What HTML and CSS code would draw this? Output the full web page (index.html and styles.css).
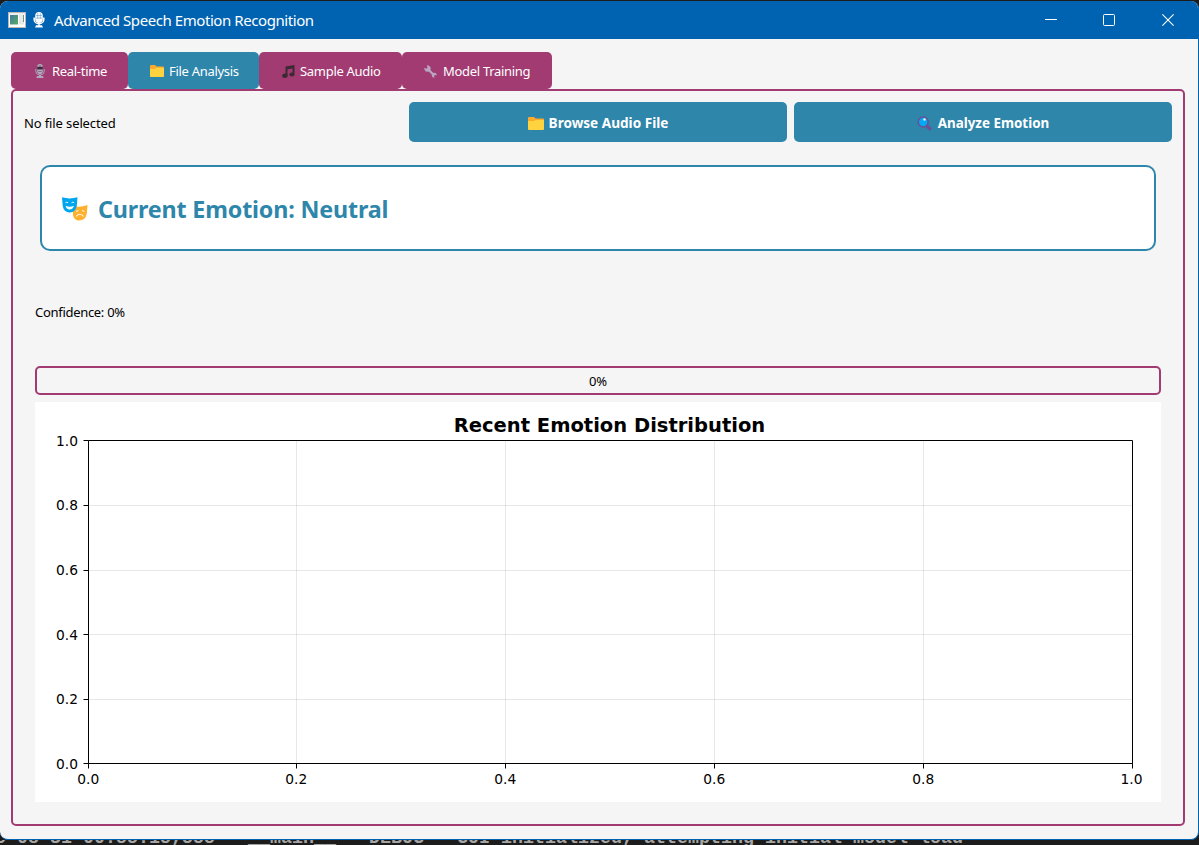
FILE: index.html
```html
<!DOCTYPE html>
<html lang="en">
<head>
<meta charset="utf-8">
<title>Advanced Speech Emotion Recognition</title>
<link rel="stylesheet" href="styles.css">
</head>
<body>
<main class="window">
  <header class="titlebar">
    <svg class="app-icon" width="18" height="16" viewBox="0 0 18 16"><rect width="18" height="16" fill="#fff"/><rect x=".5" y=".5" width="17" height="15" fill="none" stroke="#b9b9b9"/><path d="M1 2h16" stroke="#ddd"/><defs><linearGradient id="g" x2="1" y2="1"><stop stop-color="#4379a0"/><stop offset="1" stop-color="#57ad63"/></linearGradient></defs><rect x="2" y="3" width="8" height="9.500" fill="url(#g)"/><rect x="11" y="3" width="5" height="9.500" fill="#e8e8e8"/><path d="M15.500 3v7" stroke="#6b9a86"/></svg>
    <svg class="mic-icon" width="12" height="16" viewBox="0 0 12 16"><rect x="2.200" y="0" width="7.600" height="11" rx="3.800" fill="#fff"/><path d="M1.200 5.500v2.200a4.800 4 0 0 0 9.600 0V5.500M6 11.500V14" fill="none" stroke="#fff" stroke-width="1.500"/><path d="M2 15.500l1-2.200h6l1 2.200z" fill="#fff"/><path d="M3 3.500h6M3 6h6M4.700 1v6M7.300 1v6" stroke="#0063b1" stroke-width=".5" stroke-opacity=".7"/></svg>
    <h1 class="title">Advanced Speech Emotion Recognition</h1>
    <div class="controls">
      <svg class="minimize" width="12" height="12" viewBox="0 0 12 12"><path d="M0 5.500h12" stroke="#fff"/></svg>
      <svg width="12" height="12" viewBox="0 0 12 12"><rect x=".5" y=".5" width="11" height="11" rx="1" fill="none" stroke="#fff"/></svg>
      <svg width="12" height="12" viewBox="0 0 12 12"><path d="M.4.4l11.200 11.200M11.600.4L.4 11.600" stroke="#fff" stroke-width="1.100"/></svg>
    </div>
  </header>
  <div class="client">
    <nav class="tabs">
      <div class="tab tab-live"><svg width="10" height="14" viewBox="0 0 10 14"><rect x="2.200" y="0" width="5.600" height="10" rx="2.800" fill="#b4a9bd"/><path d="M.8 5v2a4.200 4 0 0 0 8.400 0V5" fill="none" stroke="#a394ae" stroke-width="1.200"/><path d="M2.200 2.800h5.600v2.700H2.200z" fill="#3c2a3e"/><path d="M3.200 7.500h3.600M5 1v2" stroke="#6b5d70" stroke-width=".7"/><path d="M4 11h2v1l2.500.5V14h-7v-1.500L4 12z" fill="#b4a9bd"/></svg><span>Real-time</span></div>
      <div class="tab tab-file active"><svg width="14" height="12" viewBox="0 0 14 12"><path d="M0 1q0-1 1-1h4l1.500 1.500H13q1 0 1 1V5H0z" fill="#ffa92b"/><path d="M0 4h5l1.500-1.200H13q1 0 1 1V11q0 1-1 1H1q-1 0-1-1z" fill="#ffd23f"/></svg><span>File Analysis</span></div>
      <div class="tab tab-sample"><svg width="13" height="13" viewBox="0 0 13 13"><path d="M3.500 1.500L12.500 0v9.500h-2V3.500l-5 .8V11h-2z" fill="#3c2a33"/><ellipse cx="2.900" cy="10.700" rx="2.700" ry="2.200" fill="#3c2a33"/><ellipse cx="9.900" cy="9.500" rx="2.600" ry="2.100" fill="#3c2a33"/></svg><span>Sample Audio</span></div>
      <div class="tab tab-model"><svg width="13" height="13" viewBox="0 0 13 13"><path d="M3.800 4l6 6" stroke="#b9a4c4" stroke-width="2.300"/><path d="M2.800.4A3.200 3.200 0 1 1 .4 2.800l2 .9 1.100-1.200zM10.500 12.700a2.500 2.500 0 1 1 2.200-2.300l-1.600-.4-1 1z" fill="#b9a4c4"/></svg><span>Model Training</span></div>
    </nav>
    <section class="pane">
      <div class="actions">
        <div class="file-label">No file selected</div>
        <button class="button browse"><svg width="16" height="13" viewBox="0 0 16 13"><path d="M0 1q0-1 1-1h5l1.500 1.500H15q1 0 1 1V6H0z" fill="#ffa92b"/><path d="M0 4h6l1.500-1H15q1 0 1 1v8q0 1-1 1H1q-1 0-1-1z" fill="#ffd23f"/></svg><span>Browse Audio File</span></button>
        <button class="button analyze"><svg width="15" height="15" viewBox="0 0 15 15"><path d="M9.500 9.500l3.500 3.200" stroke="#6b5094" stroke-width="3.200" stroke-linecap="round"/><circle cx="6.200" cy="6" r="5" fill="#00a9f4" stroke="#6b5094" stroke-width="1.600"/><circle cx="7.500" cy="3.500" r="1.200" fill="#e8faff"/></svg><span>Analyze Emotion</span></button>
      </div>
      <div class="emotion">
        <svg width="26" height="24" viewBox="0 0 26 24"><path d="M11 9q7 2 14.500-1l-.7 8.500Q23.500 23.500 17 23.500q-4.500 0-6-5z" fill="#ffb02e"/><path d="M0 .3Q7.500 2.500 15.500.3L14.800 9q-1.300 6-7 6.500Q1.700 15 .7 9z" fill="#00a6ed"/><path d="M3.500 5.700q1.300-1 2.600 0M9.500 5.700q1.300-1 2.600 0" stroke="#fff" stroke-width=".9" fill="none"/><path d="M3.500 8.800q4.200 2 8.400 0-.8 3.700-4.200 3.700T3.500 8.800z" fill="#fff"/><path d="M14 14.500l2.500-1M20 13.500l2.500 1M14 19.500q4-4.500 7.500 0" fill="none" stroke="#fff4dc" stroke-width="1.100"/></svg>
        <span>Current Emotion: Neutral</span>
      </div>
      <div class="confidence">Confidence: 0%</div>
      <div class="progress"><span>0%</span></div>
      <svg class="chart" width="1126" height="400" viewBox="0 0 1126 400">
        <rect width="1126" height="400" fill="#fff"/>
        <path class="grid" d="M261.500 38v323M470.500 38v323M679.500 38v323M888.500 38v323M53 103.500h1044M53 168.500h1044M53 232.500h1044M53 297.500h1044"/>
        <path class="axis" d="M53.500 38.500h1044v323h-1044zM48.500 38.500h5M48.500 103.500h5M48.500 168.500h5M48.500 232.500h5M48.500 297.500h5M48.500 361.500h5M53.500 361.500v5M261.500 361.500v5M470.500 361.500v5M679.500 361.500v5M888.500 361.500v5M1097.500 361.500v5"/>
        <text class="chart-title" x="574.500" y="30">Recent Emotion Distribution</text>
        <g class="y-labels"><text x="43" y="44">1.0</text><text x="43" y="108">0.8</text><text x="43" y="173">0.6</text><text x="43" y="238">0.4</text><text x="43" y="302">0.2</text><text x="43" y="367">0.0</text></g>
        <g class="x-labels"><text x="53.200" y="382">0.0</text><text x="261.200" y="382">0.2</text><text x="470.200" y="382">0.4</text><text x="679.200" y="382">0.6</text><text x="888.200" y="382">0.8</text><text x="1096.500" y="382">1.0</text></g>
      </svg>
    </section>
  </div>
</main>
<footer class="terminal"><pre>2025-08-31 00:55:15,555 - __main__ - DEBUG - GUI initialized, attempting initial model load</pre></footer>
</body>
</html>
```
FILE: styles.css
```css
* { box-sizing: border-box; }
body {
  margin: 0;
  width: 1199px;
  height: 845px;
  overflow: hidden;
  padding-top: 1px;
  background: #1c1c1c;
  font: 13px/18px "Noto Sans", "Open Sans", sans-serif;
  color: #000;
}
svg { display: block; flex: none; }
.window {
  height: 839px;
  border-right: 1px solid #0063b1;
  border-bottom: 1px solid #0063b1;
  border-radius: 8px;
  overflow: hidden;
  background: #f5f5f5;
}
.titlebar {
  height: 38px;
  display: flex;
  align-items: center;
  padding-left: 8px;
  background: #0063b1;
}
.mic-icon { margin-left: 7px; }
.title {
  margin: 0 0 0 9px;
  font-size: 15px;
  font-weight: 400;
  line-height: 20px;
  letter-spacing: -0.43px;
  color: #fff;
  white-space: nowrap;
}
.controls { margin-left: auto; display: flex; gap: 47px; padding-right: 24px; }
.minimize { margin-right: -1px; }
.client { padding: 13px 13px 13px 11px; height: 800px; display: flex; flex-direction: column; }
.tabs { display: flex; height: 37px; flex: none; }
.tab {
  display: flex;
  align-items: center;
  border-radius: 5px;
  background: #a23b72;
  color: #fff;
  letter-spacing: -0.3px;
  white-space: nowrap;
}
.tab.active { background: #2e86ab; }
.tab span { padding-top: 1px; }
.tab svg { margin-top: 1px; }
.tab-live { width: 117px; padding-left: 24px; gap: 7px; }
.tab-file { width: 131px; padding-left: 22px; gap: 5px; }
.tab-sample { width: 143px; padding-left: 23px; gap: 5px; }
.tab-model { width: 150px; padding-left: 22px; gap: 6px; }
.pane {
  height: 737px;
  flex: none;
  display: flex;
  flex-direction: column;
  border: 2px solid #a23b72;
  border-radius: 5px;
  padding: 11px;
}
.actions {
  display: grid;
  grid-template-columns: repeat(3, 378px);
  column-gap: 7px;
  height: 40px;
  align-items: center;
}
.file-label { padding-top: 2px; letter-spacing: -0.12px; }
.button {
  height: 40px;
  border: 0;
  border-radius: 5px;
  background: #2e86ab;
  color: #fff;
  font: 700 13.6px/18px "Noto Sans", sans-serif;
  display: flex;
  align-items: center;
  justify-content: center;
  padding: 2px 0 0;
  gap: 5px;
}
.analyze { font-size: 13.4px; gap: 6px; }
.emotion {
  margin: 23px 16px 0;
  height: 86px;
  display: flex;
  align-items: center;
  gap: 10px;
  padding: 2px 0 0 20px;
  background: #fff;
  border: 2px solid #2e86ab;
  border-radius: 10px;
  color: #2e86ab;
  font-size: 23.3px;
  line-height: 32px;
  font-weight: 700;
  letter-spacing: -0.17px;
}
.confidence { margin: 52px 11px 0; height: 18px; letter-spacing: -0.3px; }
.progress {
  margin: 45px 11px 0;
  height: 29px;
  border: 2px solid #a23b72;
  border-radius: 5px;
  display: flex;
  align-items: center;
  justify-content: center;
}
.chart { margin: 7px 11px 0; }
.grid { stroke: #b0b0b0; stroke-opacity: 0.3; fill: none; }
.axis { stroke: #000; fill: none; }
.chart text { font-family: "DejaVu Sans", sans-serif; font-size: 13.8px; }
.chart .chart-title { font-size: 19.5px; font-weight: 700; text-anchor: middle; }
.y-labels { text-anchor: end; }
.x-labels { text-anchor: middle; }
.terminal { height: 5px; overflow: hidden; display: flex; align-items: flex-end; }
.terminal pre {
  margin: 0 0 -4px -38px;
  font: 700 18.33px/20px "Liberation Mono", monospace;
  color: #a5a5a5;
}
```
